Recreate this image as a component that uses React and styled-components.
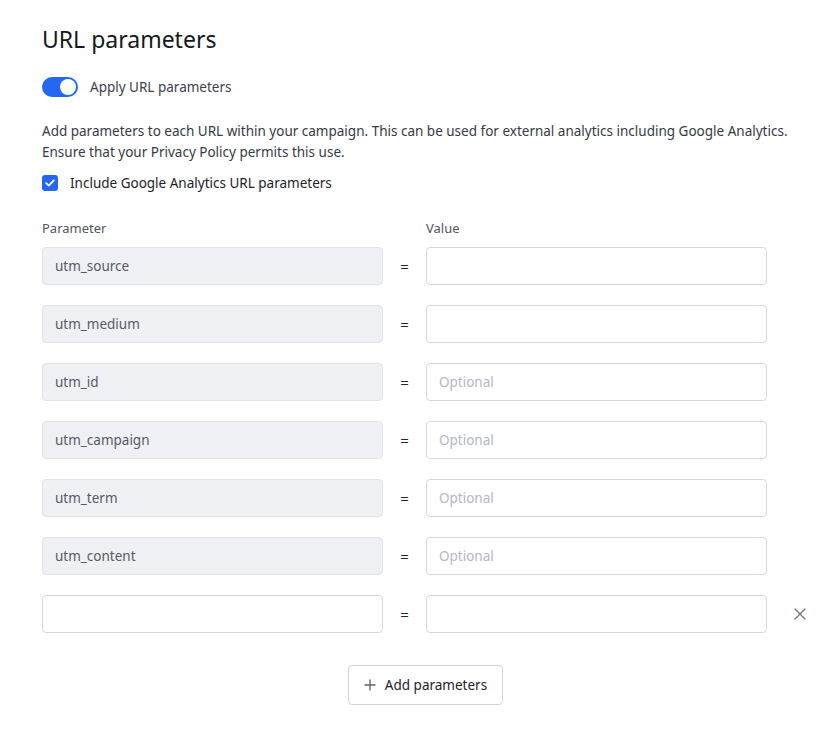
import React from "react";
import styled, { createGlobalStyle } from "styled-components";

const Global = createGlobalStyle`
  html, body { margin: 0; padding: 0; background: #fff; }
  body { font-family: "Noto Sans", "Open Sans", sans-serif; color: #2a2f3a; }
  * { box-sizing: border-box; }
`;

const Page = styled.div`
  width: 840px;
  padding: 22px 0 24px 42px;
`;

const Title = styled.h1`
  margin: 0;
  font-size: 23px;
  font-weight: 400;
  line-height: 34px;
  color: #15181e;
`;

const ToggleRow = styled.label`
  display: flex;
  align-items: center;
  gap: 12px;
  margin-top: 21px;
  font-size: 13.5px;
  color: #3b404b;
  height: 20px;
`;

const Toggle = styled.span`
  position: relative;
  width: 36px;
  height: 20px;
  border-radius: 10px;
  background: #2468f2;
  flex: none;
  &::after {
    content: "";
    position: absolute;
    top: 2px;
    right: 2px;
    width: 16px;
    height: 16px;
    border-radius: 50%;
    background: #fff;
  }
`;

const Desc = styled.p`
  margin: 24px 0 0;
  font-size: 13.5px;
  line-height: 21px;
  color: #353a45;
`;

const CheckRow = styled.label`
  display: flex;
  align-items: center;
  gap: 12px;
  margin-top: 10px;
  font-size: 13.5px;
  color: #1d212a;
  height: 20px;
`;

const Check = styled.span`
  width: 16px;
  height: 16px;
  border-radius: 3px;
  background: #2468f2;
  display: flex;
  align-items: center;
  justify-content: center;
  flex: none;
`;

const Grid = styled.div`
  display: grid;
  grid-template-columns: 341px 43px 341px 66px;
  row-gap: 20px;
  margin-top: 26px;
  align-items: center;
`;

const Label = styled.div`
  font-size: 13px;
  color: #4f5561;
  line-height: 18px;
  margin-bottom: -10px;
`;

const Field = styled.div`
  height: 38px;
  border-radius: 4px;
  border: 1px solid ${(p) => (p.$readonly ? "#e1e3e8" : "#d5d8de")};
  background: ${(p) => (p.$readonly ? "#eef0f3" : "#fff")};
  padding: 0 12px;
  display: flex;
  align-items: center;
  font-size: 13.5px;
  color: ${(p) => (p.$placeholder ? "#b3b8c4" : "#555b67")};
`;

const Eq = styled.div`
  text-align: center;
  font-size: 15px;
  color: #1d212a;
`;

const Remove = styled.button`
  border: none;
  background: none;
  padding: 0;
  justify-self: center;
  display: flex;
  color: #6b717d;
  cursor: pointer;
`;

const Footer = styled.div`
  display: flex;
  justify-content: center;
  width: 767px;
  margin-top: 32px;
`;

const AddButton = styled.button`
  height: 40px;
  padding: 0 15px;
  border: 1px solid #d0d4da;
  border-radius: 4px;
  background: #fff;
  font-family: inherit;
  font-size: 13.5px;
  color: #1d212a;
  display: flex;
  align-items: center;
  gap: 9px;
`;

const rows = [
  { name: "utm_source", value: "" },
  { name: "utm_medium", value: "" },
  { name: "utm_id", value: "Optional" },
  { name: "utm_campaign", value: "Optional" },
  { name: "utm_term", value: "Optional" },
  { name: "utm_content", value: "Optional" },
];

export default function App() {
  return (
    <Page>
      <Global />
      <Title>URL parameters</Title>
      <ToggleRow>
        <Toggle />
        Apply URL parameters
      </ToggleRow>
      <Desc>
        Add parameters to each URL within your campaign. This can be used for external analytics including Google Analytics.
        <br />
        Ensure that your Privacy Policy permits this use.
      </Desc>
      <CheckRow>
        <Check>
          <svg width="10" height="8" viewBox="0 0 10 8" fill="none">
            <path d="M1.2 4.2 L3.8 6.6 L8.8 1.4" stroke="#fff" strokeWidth="1.8" strokeLinecap="round" strokeLinejoin="round" />
          </svg>
        </Check>
        Include Google Analytics URL parameters
      </CheckRow>
      <Grid>
        <Label>Parameter</Label>
        <div />
        <Label>Value</Label>
        <div />
        {rows.map((r) => (
          <React.Fragment key={r.name}>
            <Field $readonly>{r.name}</Field>
            <Eq>=</Eq>
            <Field $placeholder={!!r.value}>{r.value}</Field>
            <div />
          </React.Fragment>
        ))}
        <Field />
        <Eq>=</Eq>
        <Field />
        <Remove aria-label="Remove">
          <svg width="14" height="14" viewBox="0 0 14 14" fill="none">
            <path d="M2 2 L12 12 M12 2 L2 12" stroke="currentColor" strokeWidth="1.3" strokeLinecap="round" />
          </svg>
        </Remove>
      </Grid>
      <Footer>
        <AddButton>
          <svg width="12" height="12" viewBox="0 0 12 12" fill="none">
            <path d="M6 0.5 V11.5 M0.5 6 H11.5" stroke="#5b616d" strokeWidth="1.3" />
          </svg>
          Add parameters
        </AddButton>
      </Footer>
    </Page>
  );
}
